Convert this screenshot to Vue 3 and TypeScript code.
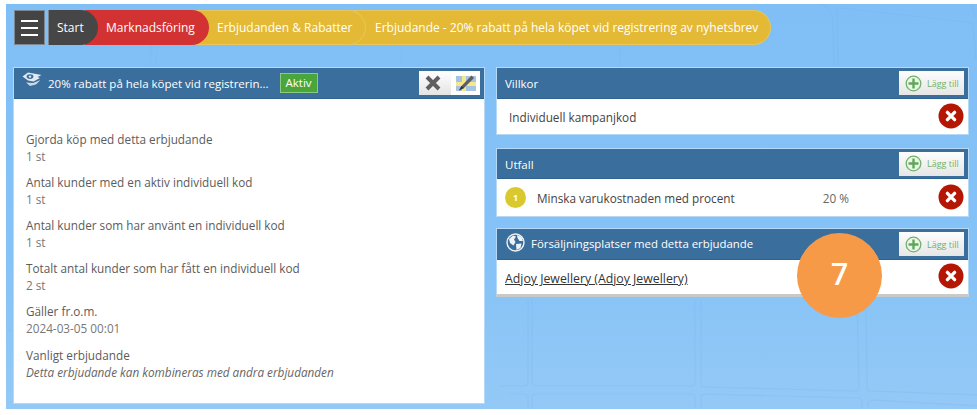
<script setup lang="ts">
const stats = [
  { label: 'Gjorda köp med detta erbjudande', value: '1 st' },
  { label: 'Antal kunder med en aktiv individuell kod', value: '1 st' },
  { label: 'Antal kunder som har använt en individuell kod', value: '1 st' },
  { label: 'Totalt antal kunder som har fått en individuell kod', value: '2 st' },
  { label: 'Gäller fr.o.m.', value: '2024-03-05 00:01' },
  { label: 'Vanligt erbjudande', value: 'Detta erbjudande kan kombineras med andra erbjudanden', em: true },
]
</script>

<template>
  <div class="page">
    <div class="canvas">
      <svg class="tiles" width="971" height="405" viewBox="6 4 971 405" fill="none">
        <g stroke="#6fb0ea" stroke-opacity="0.24" stroke-width="1.2">
          <path d="M532 300 V382 Q532 386 536 386 H691 Q695 386 695 382 V300" />
          <path d="M701 300 V383 Q701 387 705 387 L855 391 Q859 391 859 387 L857 300" />
          <path d="M866 300 L867 387 Q867 391 871 391 L980 395" />
          <path d="M532 409 V398 Q532 394 536 394 H691 Q695 394 695 398 V409" />
          <path d="M701 409 V398 Q701 394 705 394 L858 398 Q862 398 862 402 V409" />
          <path d="M868 409 V404 Q868 400 872 400 L980 406" />
          <path d="M500 386 H524 Q528 386 528 382 V300" />
          <path d="M510 394 H524 Q528 394 528 398 V409" />
          <path d="M838 66 L837 12 Q837 8 841 8 L968 22 Q972 22 973 26 L976 60" />
          <path d="M834 66 L833 24 Q832 6 820 4" />
          <path d="M972 4 L975 17" />
          <path d="M150 66 L152 34 M156 66 L158 34 M400 66 L403 44 M620 66 L620 48" stroke-opacity="0.16" />
          <path d="M6 402 H12 M6 330 H12" stroke-opacity="0.16" />
        </g>
      </svg>

      <nav class="crumbs">
        <button class="menu" aria-label="Meny"><span></span><span></span><span></span></button>
        <div class="trail">
          <span class="crumb start">Start</span>
          <span class="crumb red">Marknadsföring</span>
          <span class="crumb yellow first">Erbjudanden &amp; Rabatter</span>
          <span class="crumb yellow last">Erbjudande - 20% rabatt på hela köpet vid registrering av nyhetsbrev</span>
        </div>
      </nav>

      <main class="columns">
        <section class="panel left">
          <header class="head">
            <svg class="tag" width="20" height="16" viewBox="0 0 20 16">
              <path d="M0.5 4.5 L6 0.5 L19.5 3 L15.5 5 L18 6 L11.5 9.5 L6 8.5 Z" fill="#e3ebf2" />
              <ellipse cx="8" cy="4.6" rx="3.4" ry="2.3" fill="#3a6e9c" />
              <circle cx="8" cy="4.6" r="1.2" fill="#e3ebf2" />
              <path d="M4 10.5 L11 11 L18.5 8 L14 12.5 L8 14 Z" fill="#c9d7e4" />
            </svg>
            <span class="title">20% rabatt på hela köpet vid registrerin...</span>
            <span class="active">Aktiv</span>
            <span class="tools">
              <span class="tool close">
                <svg width="20" height="20" viewBox="0 0 20 20"><path d="M4 4 L16 16 M16 4 L4 16" stroke="#5f5f5f" stroke-width="4" /></svg>
              </span>
              <span class="tool edit">
                <svg width="24" height="22" viewBox="0 0 24 22">
                  <rect x="2" y="4" width="20" height="15" fill="#a6c3e2" />
                  <rect x="8" y="4" width="4" height="15" fill="#f3e88a" />
                  <rect x="2" y="10" width="20" height="4" fill="#f3e88a" />
                  <path d="M5 18.5 L7.5 14 L17.5 3.5 L20 6 L10 16 Z" fill="#5f5f5f" />
                  <path d="M5 18.5 L7.5 14 L10 16 Z" fill="#333" />
                </svg>
              </span>
            </span>
          </header>
          <div class="stats">
            <div v-for="s in stats" :key="s.label" class="stat">
              <div class="label">{{ s.label }}</div>
              <div class="value" :class="{ em: s.em }">{{ s.value }}</div>
            </div>
          </div>
        </section>

        <div class="right">
          <section class="panel box one">
            <header class="head">
              <span class="name">Villkor</span>
              <button class="add">
                <svg width="17" height="17" viewBox="0 0 17 17"><circle cx="8.5" cy="8.5" r="7.3" fill="#eef6ec" stroke="#6fb36a" stroke-width="1.3" /><path d="M8.5 3.5 V13.5 M3.5 8.5 H13.5" stroke="#5fa85a" stroke-width="2.4" /></svg>
                <span>Lägg till</span>
              </button>
            </header>
            <div class="row">
              <span class="txt">Individuell kampanjkod</span>
              <span class="del"><svg width="26" height="26" viewBox="0 0 26 26"><circle cx="13" cy="13" r="12.5" fill="#b51503" /><path d="M9.4 9.4 L16.6 16.6 M16.6 9.4 L9.4 16.6" stroke="#fff" stroke-width="3.4" stroke-linecap="round" /></svg></span>
            </div>
          </section>

          <section class="panel box two">
            <header class="head">
              <span class="name">Utfall</span>
              <button class="add">
                <svg width="17" height="17" viewBox="0 0 17 17"><circle cx="8.5" cy="8.5" r="7.3" fill="#eef6ec" stroke="#6fb36a" stroke-width="1.3" /><path d="M8.5 3.5 V13.5 M3.5 8.5 H13.5" stroke="#5fa85a" stroke-width="2.4" /></svg>
                <span>Lägg till</span>
              </button>
            </header>
            <div class="row">
              <span class="num">1</span>
              <span class="txt">Minska varukostnaden med procent</span>
              <span class="pct">20 %</span>
              <span class="del"><svg width="26" height="26" viewBox="0 0 26 26"><circle cx="13" cy="13" r="12.5" fill="#b51503" /><path d="M9.4 9.4 L16.6 16.6 M16.6 9.4 L9.4 16.6" stroke="#fff" stroke-width="3.4" stroke-linecap="round" /></svg></span>
            </div>
          </section>

          <section class="panel box three">
            <header class="head">
              <svg class="globe" width="19" height="19" viewBox="0 0 19 19">
                <circle cx="9.5" cy="9.5" r="8.5" fill="none" stroke="#eef3f8" stroke-width="1.4" />
                <path d="M3 6 L7 2.5 L10 3.5 L8 6.5 L9.5 9 L7.5 12.5 L4 10 Z M11 2 L15.5 4 L17 8 L13.5 8 L11.5 5 Z M10 11 L15.5 10.5 L14.5 15 L10.5 17 Z" fill="#eef3f8" />
              </svg>
              <span class="name">Försäljningsplatser med detta erbjudande</span>
              <button class="add">
                <svg width="17" height="17" viewBox="0 0 17 17"><circle cx="8.5" cy="8.5" r="7.3" fill="#eef6ec" stroke="#6fb36a" stroke-width="1.3" /><path d="M8.5 3.5 V13.5 M3.5 8.5 H13.5" stroke="#5fa85a" stroke-width="2.4" /></svg>
                <span>Lägg till</span>
              </button>
            </header>
            <div class="row">
              <a class="txt link">Adjoy Jewellery (Adjoy Jewellery)</a>
              <span class="del"><svg width="26" height="26" viewBox="0 0 26 26"><circle cx="13" cy="13" r="12.5" fill="#b51503" /><path d="M9.4 9.4 L16.6 16.6 M16.6 9.4 L9.4 16.6" stroke="#fff" stroke-width="3.4" stroke-linecap="round" /></svg></span>
            </div>
          </section>
        </div>
      </main>

      <div class="badge">7</div>
    </div>
  </div>
</template>

<style scoped>
.page {
  width: 977px;
  height: 415px;
  padding: 4px 0 6px 6px;
  box-sizing: border-box;
  background: #fff;
  font-family: "Open Sans", "Liberation Sans", sans-serif;
  overflow: hidden;
}
.canvas {
  position: relative;
  height: 100%;
  padding: 6px 8px 0 7px;
  box-sizing: border-box;
  background: linear-gradient(180deg, #80bff6 0%, #84c2f7 60%, #94c9f6 100%);
}
.tiles {
  position: absolute;
  left: 0;
  top: 0;
  display: block;
}
.crumbs {
  position: relative;
  display: flex;
  height: 35px;
  gap: 3px;
  margin-left: 1px;
}
.menu {
  width: 31px;
  height: 35px;
  padding: 0 6px;
  border: 1px solid #7d8791;
  background: #444;
  display: flex;
  flex-direction: column;
  justify-content: center;
  gap: 5px;
  box-sizing: border-box;
}
.menu span {
  display: block;
  height: 2px;
  background: #fff;
}
.trail {
  display: flex;
  font-size: 12px;
  color: #fff;
  line-height: 35px;
}
.crumb {
  display: block;
  height: 35px;
  white-space: nowrap;
  border-radius: 0 17.5px 17.5px 0;
  box-sizing: border-box;
  position: relative;
}
.start {
  width: 50px;
  padding-left: 8px;
  background: #464646;
  z-index: 4;
  border-left: 1px solid #7d8791;
}
.red {
  width: 124px;
  margin-left: -13px;
  padding-left: 21px;
  background: #d23232;
  z-index: 3;
}
.yellow {
  background: #e3b935;
  border: 1px solid #e8c65a;
  border-left: 0;
  line-height: 33px;
}
.first {
  width: 170px;
  margin-left: -13px;
  padding-left: 21px;
  z-index: 2;
}
.last {
  width: 418px;
  margin-left: -13px;
  padding-left: 22px;
  z-index: 1;
}
.columns {
  position: relative;
  display: grid;
  grid-template-columns: 472px 473px;
  gap: 11px;
  margin-top: 22px;
  align-items: start;
}
.panel {
  background: #fff;
  border: 1px solid #b5d9f7;
  box-sizing: border-box;
  display: flex;
  flex-direction: column;
}
.left {
  height: 337px;
}
.head {
  display: flex;
  align-items: center;
  height: 31px;
  flex: none;
  background: #3a6e9c;
  color: #fff;
  font-size: 11.5px;
  box-sizing: border-box;
  border-bottom: 1px solid #2f6290;
}
.tag {
  margin-left: 8px;
  margin-top: -6px;
  flex: none;
}
.title {
  margin-left: 6px;
  white-space: nowrap;
}
.active {
  margin-left: 11px;
  width: 38px;
  height: 20px;
  line-height: 18px;
  text-align: center;
  background: #4aa53a;
  border: 1px solid #8cc984;
  box-sizing: border-box;
  font-size: 11.5px;
}
.tools {
  margin-left: auto;
  margin-right: 4px;
  display: flex;
  height: 24px;
}
.tool {
  height: 24px;
  display: flex;
  align-items: center;
  justify-content: center;
}
.close {
  width: 32px;
  padding-right: 4px;
  box-sizing: border-box;
  background: linear-gradient(180deg, #fff, #e4e4e4);
}
.edit {
  width: 29px;
  background: #fff;
}
.stats {
  padding: 32px 12px 0;
  font-size: 11.75px;
  line-height: 17px;
}
.stat {
  margin-bottom: 9px;
}
.stat:nth-child(5) {
  margin-bottom: 10px;
}
.label {
  color: #5c5c5c;
}
.value {
  color: #777;
}
.em {
  font-style: italic;
  color: #666;
}
.right {
  display: flex;
  flex-direction: column;
}
.box .head {
  height: 31px;
  padding: 0 4px 0 8px;
}
.one {
  height: 68px;
}
.two {
  height: 69px;
  margin-top: 13px;
}
.two .head {
  height: 30px;
}
.two .name {
  margin-top: 2px;
}
.three {
  height: 69px;
  margin-top: 11px;
  border-bottom: 3px solid #c9c9c9;
}
.three .txt {
  margin-top: 3px;
}
.three .name {
  font-size: 11.4px;
  margin-top: -2px;
}
.box .head .name {
  white-space: nowrap;
}
.globe {
  margin-left: 1px;
  margin-right: 6px;
  margin-top: -4px;
  flex: none;
}
.add {
  margin-left: auto;
  width: 65px;
  height: 24px;
  padding: 0 0 0 6px;
  display: flex;
  align-items: center;
  gap: 5px;
  border: 0;
  background: linear-gradient(180deg, #fdfdfd, #e6e6e6);
  color: #6fb36a;
  font-family: inherit;
  font-size: 9px;
  box-sizing: border-box;
  white-space: nowrap;
}
.row {
  display: flex;
  flex: 1;
  align-items: center;
  padding: 0 4px 0 12px;
  font-size: 11.75px;
  color: #444;
}
.row .txt {
  white-space: nowrap;
}
.del {
  margin-left: auto;
  margin-top: -2px;
  width: 26px;
  height: 26px;
  display: block;
}
.three .del {
  margin-top: -3px;
}
.del svg {
  display: block;
}
.num {
  width: 21px;
  height: 21px;
  margin-left: -4px;
  margin-right: 11px;
  border-radius: 50%;
  background: #d9c92e;
  color: #fff;
  font-size: 9px;
  font-weight: 700;
  text-align: center;
  line-height: 21px;
  flex: none;
}
.pct {
  margin-left: 88px;
  color: #666;
}
.row .link {
  text-decoration: underline;
  color: #333;
  font-size: 12.3px;
  margin-left: -4px;
}
.badge {
  position: absolute;
  left: 791px;
  top: 229px;
  width: 85px;
  height: 85px;
  border-radius: 50%;
  background: #f79a48;
  color: #fff;
  font-size: 30px;
  font-weight: 600;
  text-align: center;
  line-height: 81px;
}
</style>
